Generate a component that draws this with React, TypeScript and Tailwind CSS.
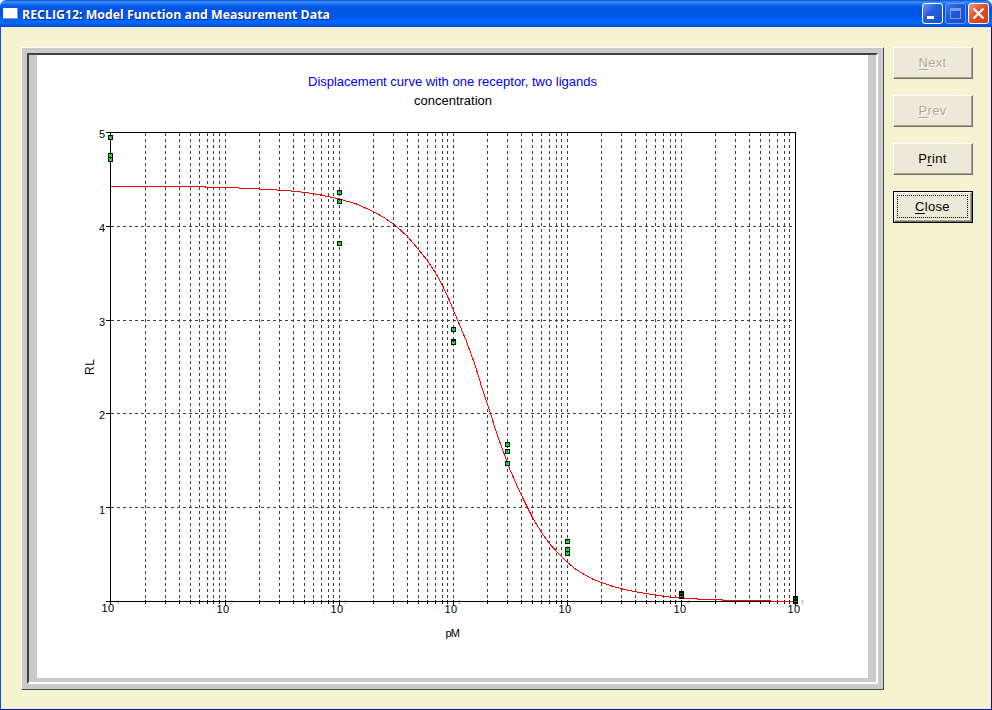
import React from "react";

const UI_FONT = "font-['Liberation_Sans',Arial,sans-serif]";

const DECADES = [110.9, 225, 339, 453, 567, 681];
const LABEL_X = [108, 223, 337, 451, 565, 680, 794];
const EXPONENTS = ["-1", "0", "1", "2", "3", "4", "5"];

const GRID_X: number[] = [];
DECADES.forEach((start) => {
  for (let k = 2; k <= 10; k++) {
    const x = Math.floor(start + 114.1 * Math.log10(k));
    if (x < 794) GRID_X.push(x);
  }
});

const GRID_Y = [226, 320, 413, 507];

const CURVE: [number, number][] = [
  [110, 186], [204, 186], [206, 187], [238, 187.5], [262, 188.6], [285, 190], [305, 192],
  [320, 194.5], [339, 198.5], [356, 203.5], [373, 211], [385, 218], [396, 226],
  [407, 236], [418, 249], [428, 261.5], [436, 274], [443, 287], [449, 300],
  [453, 310], [457.5, 320.5], [466, 341], [475, 366], [482, 389], [490, 413],
  [496, 432], [502, 449], [509, 468], [516, 484], [523, 499], [533, 519],
  [543, 535], [551, 545.5], [560, 555], [567, 562], [575, 568.5], [583, 573.5],
  [592, 578.5], [601, 582], [611, 585.5], [621, 588.3], [637, 591.6],
  [655, 594.5], [668, 596.5], [681, 597.5], [700, 598.7], [722, 599.5],
  [724, 600], [770, 600], [771, 601], [795, 601],
];

const MARKERS: [number, number][] = [
  [110, 137], [110, 155], [110, 159],
  [339, 192], [339, 201], [339, 243],
  [453, 329], [453, 341], [453, 342],
  [507, 444], [507, 451], [507, 463],
  [567, 541], [567, 549], [567, 553],
];

// Replicates that overlap almost completely: black blocks with a few green pixels left.
const CLUSTERS: [number, number][] = [
  [681, 591],
  [795, 596],
];

function Chart() {
  return (
    <svg
      width="831"
      height="623"
      viewBox="37 55 831 623"
      className={`block bg-white ${UI_FONT}`}
    >
      <g fill="none" stroke="#404040" strokeWidth="1" strokeDasharray="3 3" shapeRendering="crispEdges">
        {GRID_X.map((x) => (
          <path key={x} d={`M${x + 0.5} 133V601`} />
        ))}
        {GRID_Y.map((y) => (
          <path key={y} d={`M111 ${y + 0.5}H795`} />
        ))}
      </g>
      {EXPONENTS.map((e, i) => (
        <text key={e} x={LABEL_X[i] + 7} y="604" fontSize="5" fill="#999">
          {e}
        </text>
      ))}
      <g fill="none" stroke="#000" strokeWidth="1" shapeRendering="crispEdges">
        <path d="M106 132.5H795.5V601.5H106M110.5 132V604" />
        {GRID_X.map((x) => (
          <path key={x} d={`M${x + 0.5} 600V604`} />
        ))}
        {GRID_Y.map((y) => (
          <path key={y} d={`M106 ${y + 0.5}H111`} />
        ))}
        {[225, 339, 453, 567, 681, 795].map((x) => (
          <path key={x} d={`M${x + 0.5} 600V606`} />
        ))}
      </g>
      <polyline
        points={CURVE.map(([x, y]) => `${x + 0.5},${y + 0.5}`).join(" ")}
        fill="none"
        stroke="#ff0000"
        strokeWidth="1"
        shapeRendering="crispEdges"
      />
      <g shapeRendering="crispEdges">
        {MARKERS.map(([x, y]) => (
          <g key={`${x}-${y}`}>
            <rect x={x - 2} y={y - 2} width="5" height="5" fill="#000" />
            <rect x={x - 1} y={y - 1} width="3" height="3" fill="#00f020" />
            <rect x={x} y={y - 1} width="1" height="1" fill="#064a0a" />
          </g>
        ))}
        {CLUSTERS.map(([x, y]) => (
          <g key={x}>
            <rect x={x - 2} y={y} width="5" height="8" fill="#000" />
            <path
              d={`M${x - 1} ${y + 2}h1v1h-1zM${x + 1} ${y + 2}h1v1h-1zM${x - 1} ${y + 5}h3v1h-3z`}
              fill="#00b420"
            />
          </g>
        ))}
      </g>
      <text x="308" y="86" fontSize="13" fill="#0000f0" textLength="289">
        Displacement curve with one receptor, two ligands
      </text>
      <text x="414" y="105" fontSize="13" fill="#000" textLength="78">
        concentration
      </text>
      <g fontSize="11" fill="#000">
        <text x="99" y="138">5</text>
        <text x="99" y="232">4</text>
        <text x="99" y="326">3</text>
        <text x="99" y="419">2</text>
        <text x="99" y="514">1</text>
        {LABEL_X.map((x, i) => (
          <text key={x} x={x - 6.5} y={i === 0 ? 612 : 613} textLength="12.5">
            10
          </text>
        ))}
        <text x="445.5" y="637" textLength="14.5">pM</text>
      </g>
      <text transform="translate(94 375) rotate(-90)" fontSize="12" textLength="16">
        RL
      </text>
    </svg>
  );
}

function TitleBar() {
  return (
    <header className="flex h-[27px] shrink-0 items-center rounded-t-md bg-[linear-gradient(to_bottom,#0a4bd0_0px,#3b95ff_2px,#0b62ee_5px,#0054e3_9px,#0055e5_15px,#0366fd_21px,#0262f6_24px,#0044c8_27px)] pr-[3px] pl-[3px]">
      <span className="h-[11px] w-[15px] border-r border-b border-[#8b98ac] bg-white" />
      <h1 className="ml-[4px] pt-px font-['Open_Sans','Noto_Sans',sans-serif] text-[13px] leading-[18px] font-bold whitespace-nowrap text-white [text-shadow:1px_1px_0_#0a2a80]">
        <svg width="320" height="20" className="block overflow-visible">
          <text x="0" y="15" fill="#fff" textLength="308" lengthAdjust="spacingAndGlyphs">
            RECLIG12: Model Function and Measurement Data
          </text>
        </svg>
      </h1>
      <div className="ml-auto flex gap-[2px]">
        <CaptionButton kind="min" />
        <CaptionButton kind="max" />
        <CaptionButton kind="close" />
      </div>
    </header>
  );
}

const CAPTION_STYLE = {
  min: "border-white bg-[linear-gradient(135deg,#6d99f0,#2a5fdc_40%,#1c4fd0)]",
  max: "border-[#6d9af5] bg-[linear-gradient(135deg,#3f78ea,#1d55d8_50%,#1a4fd0)]",
  close: "border-white bg-[linear-gradient(135deg,#f09a80,#e0502a_45%,#cc3c12)]",
};

function CaptionButton({ kind }: { kind: "min" | "max" | "close" }) {
  return (
    <button className={`block h-[21px] w-[21px] rounded-[3px] border ${CAPTION_STYLE[kind]}`}>
      <svg width="19" height="19" viewBox="0 0 19 19" className="block">
        {kind === "min" && <path d="M4 12H11V15H4Z" fill="#fff" />}
        {kind === "max" && (
          <path d="M4 4H15V15H4ZM5 7V14H14V7Z" fill="#7d9cec" fillRule="evenodd" />
        )}
        {kind === "close" && (
          <path d="M4.5 4.5L14.5 14.5M14.5 4.5L4.5 14.5" stroke="#fff" strokeWidth="2.2" />
        )}
      </svg>
    </button>
  );
}

const RAISED =
  "border border-t-white border-l-white border-r-[#716f64] border-b-[#716f64] shadow-[inset_-1px_-1px_0_#aca899]";

function SideButton({
  before = "",
  hot,
  after,
  disabled,
  focused,
}: {
  before?: string;
  hot: string;
  after: string;
  disabled?: boolean;
  focused?: boolean;
}) {
  return (
    <button
      disabled={disabled}
      className={`h-8 w-20 bg-[#ece9d8] text-[13px] leading-[16px] tracking-[0.3px] ${
        focused ? "border border-black" : RAISED
      } ${disabled ? "text-[#aca899] [text-shadow:1px_1px_0_#fff]" : "text-black"}`}
    >
      <span
        className={`flex h-full w-full items-center justify-center ${
          focused ? `${RAISED} pt-[2px] pr-[3px] pb-[3px] pl-[2px]` : "pr-px pb-px"
        }`}
      >
        <span
          className={`flex h-full w-full items-center justify-center ${
            focused ? "border border-dotted border-black" : ""
          }`}
        >
          <span>
            {before}
            <u className="underline-offset-[2px]">{hot}</u>
            {after}
          </span>
        </span>
      </span>
    </button>
  );
}

export default function App() {
  return (
    <div className={`flex h-[710px] w-[992px] flex-col bg-white ${UI_FONT}`}>
      <TitleBar />
      <main className="flex flex-1 items-start border-r border-b border-l border-r-[#001a9c] border-b-[#001a9c] border-l-[#0850e0] bg-[#f4f3cf] pt-[20px] pl-[20px]">
        <section className="h-[643px] w-[863px] border border-t-white border-r-[#48484a] border-b-[#48484a] border-l-white bg-[#cacaca] pt-[5px] pl-[5px]">
          <div className="h-[631px] w-[851px] border-2 border-t-[#404040] border-r-white border-b-white border-l-[#404040] bg-[#cacaca] pl-[8px]">
            <Chart />
          </div>
        </section>
        <nav className="ml-[9px] flex flex-col gap-4">
          <SideButton hot="N" after="ext" disabled />
          <SideButton hot="P" after="rev" disabled />
          <SideButton before="P" hot="r" after="int" />
          <SideButton hot="C" after="lose" focused />
        </nav>
      </main>
    </div>
  );
}
